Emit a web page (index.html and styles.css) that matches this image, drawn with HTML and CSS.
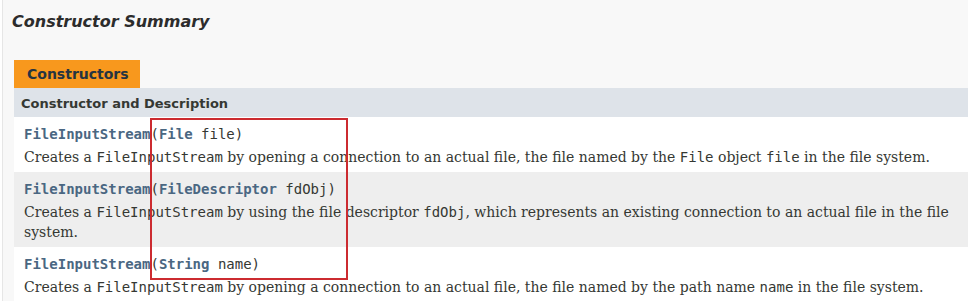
FILE: index.html
```html
<!DOCTYPE html>
<html lang="en">
<head>
<meta charset="utf-8">
<title>FileInputStream</title>
<link rel="stylesheet" href="styles.css">
</head>
<body>
<div class="summary">
  <h3 class="summary-title">Constructor Summary</h3>
  <div class="table-wrap">
    <div class="caption"><span>Constructors</span></div>
    <div class="table">
      <div class="head-row">Constructor and Description</div>
      <div class="row alt-a">
        <code class="sig"><a class="member">FileInputStream</a>(<a class="type">File</a>&nbsp;file)</code>
        <div class="block">Creates a <code>FileInputStream</code> by opening a connection to an actual file, the file named by the <code>File</code> object <code>file</code> in the file system.</div>
      </div>
      <div class="row alt-b">
        <code class="sig"><a class="member">FileInputStream</a>(<a class="type">FileDescriptor</a>&nbsp;fdObj)</code>
        <div class="block">Creates a <code>FileInputStream</code> by using the file descriptor <code>fdObj</code>, which represents an existing connection to an actual file in the file system.</div>
      </div>
      <div class="row alt-a">
        <code class="sig"><a class="member">FileInputStream</a>(<a class="type">String</a>&nbsp;name)</code>
        <div class="block">Creates a <code>FileInputStream</code> by opening a connection to an actual file, the file named by the path name <code>name</code> in the file system.</div>
      </div>
    </div>
    <div class="highlight"></div>
  </div>
</div>
</body>
</html>
```
FILE: styles.css
```css
html, body {
  margin: 0;
  padding: 0;
  background: #ffffff;
  height: 100%;
  overflow: hidden;
}

body {
  font-family: "DejaVu Sans", Arial, sans-serif;
  font-size: 14px;
  color: #353833;
}

.summary {
  margin-left: 2px;
  border-left: 1px solid #e6e6e6;
  background: #f8f8f8;
  padding: 11px 0 0 11px;
  min-height: 100%;
  box-sizing: border-box;
}

.summary-title {
  margin: 0 0 0 -2px;
  padding: 0;
  font-size: 16px;
  font-style: italic;
  font-weight: bold;
  line-height: 22px;
  color: #2c2c2c;
}

.table-wrap {
  position: relative;
  margin-top: 27px;
}

.caption {
  display: flex;
}

.caption span {
  display: block;
  background: #f8981d;
  color: #253441;
  font-weight: bold;
  font-size: 14px;
  line-height: 28px;
  height: 28px;
  padding: 0 13px;
  width: 100px;
}

.head-row {
  background: #dee3e9;
  font-weight: bold;
  font-size: 13px;
  line-height: 17px;
  padding: 7px 0 5px 7px;
  color: #353833;
}

.row {
  padding: 8px 3px 5px 10px;
}

.alt-a { background: #ffffff; }
.alt-b { background: #eeeeee; }

.sig {
  display: block;
  font-family: "DejaVu Sans Mono", monospace;
  font-size: 14px;
  line-height: 18px;
  color: #353833;
}

.sig a {
  color: #4a6782;
  font-weight: bold;
  text-decoration: none;
}

.block {
  font-family: "DejaVu Serif", Georgia, serif;
  font-size: 14px;
  line-height: 20px;
  margin-top: 4px;
  color: #353833;
}

.block code {
  font-family: "DejaVu Sans Mono", monospace;
  font-size: 14px;
}

.highlight {
  position: absolute;
  left: 136px;
  top: 58px;
  width: 194px;
  height: 158px;
  border: 2px solid #cc2b30;
}
```
